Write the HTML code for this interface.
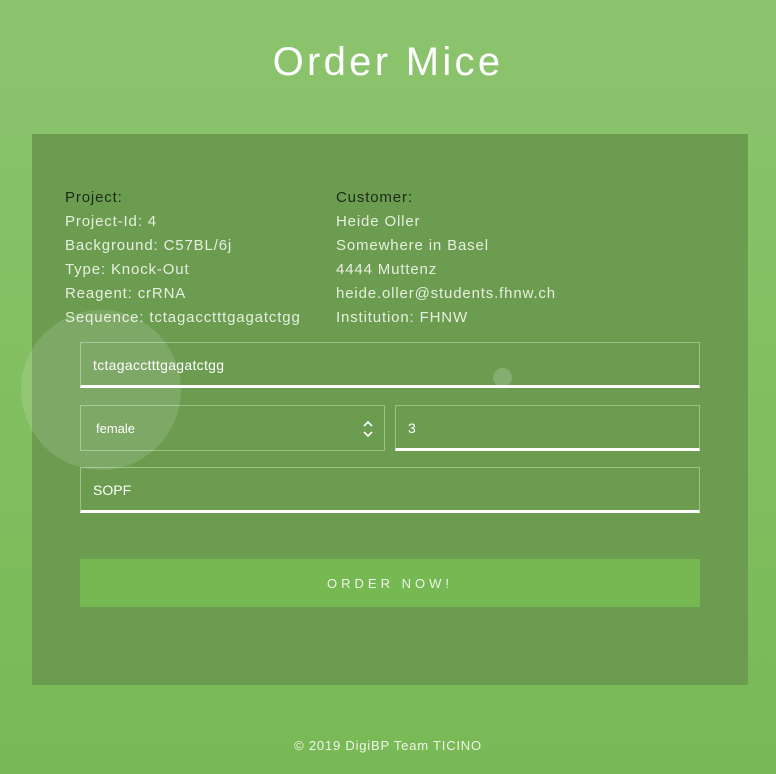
<!DOCTYPE html>
<html><head><meta charset="utf-8"><style>
body{margin:0;width:776px;height:774px;background:linear-gradient(#8cc46e,#78b955);font-family:"Liberation Sans",sans-serif;position:relative;overflow:hidden}
h1{position:absolute;top:40px;left:0;width:776px;text-align:center;margin:0;font-weight:400;font-size:40px;letter-spacing:3.3px;color:#fff;line-height:44px}
.panel{position:absolute;left:32px;top:134px;width:716px;height:551px;background:#6b9c50}
.col{position:absolute;top:52px;font-size:15px;line-height:24px;color:#e6efdf;letter-spacing:.85px}
.col b{font-weight:400;color:#1d2a16}
.f{position:absolute;box-sizing:border-box;border:1px solid #9dc287;color:#fff;font-size:14px;padding-left:12px}
.ul{border-bottom:3px solid #fff}
.btn{position:absolute;left:48px;top:425px;width:620px;height:48px;background:#76b852;color:#eef5e9;font-size:13px;letter-spacing:4px;text-align:center;line-height:50px}
.circ{position:absolute;left:21px;top:310px;width:160px;height:160px;border-radius:50%;background:rgba(255,255,255,.13)}
.dot{position:absolute;left:493px;top:368px;width:19px;height:19px;border-radius:50%;background:rgba(255,255,255,.18)}
.foot{position:absolute;top:738px;width:776px;text-align:center;color:#eef5ea;font-size:13px;letter-spacing:.8px}
</style></head><body>
<h1>Order Mice</h1>
<div class="panel">
<div class="col" style="left:33px"><b>Project:</b><br>Project-Id: 4<br>Background: C57BL/6j<br>Type: Knock-Out<br>Reagent: crRNA<br>Sequence: tctagacctttgagatctgg</div>
<div class="col" style="left:304px"><b>Customer:</b><br>Heide Oller<br>Somewhere in Basel<br>4444 Muttenz<br>heide.oller@students.fhnw.ch<br>Institution: FHNW</div>
<div class="f ul" style="left:48px;top:208px;width:620px;height:46px;line-height:44px;letter-spacing:.3px">tctagacctttgagatctgg</div>
<div class="f" style="left:48px;top:271px;width:305px;height:46px;line-height:46px;font-size:13px;padding-left:15px">female
<svg style="position:absolute;right:10px;top:13px" width="12" height="20" viewBox="0 0 12 20"><path d="M2 7l4-4 4 4M2 13l4 4 4-4" stroke="#fff" stroke-width="1.6" fill="none"/></svg></div>
<div class="f ul" style="left:363px;top:271px;width:305px;height:46px;line-height:44px">3</div>
<div class="f ul" style="left:48px;top:333px;width:620px;height:46px;line-height:44px">SOPF</div>
<div class="btn">ORDER NOW!</div>
</div>
<div class="circ"></div><div class="dot"></div>
<div class="foot">© 2019 DigiBP Team TICINO</div>
</body></html>
